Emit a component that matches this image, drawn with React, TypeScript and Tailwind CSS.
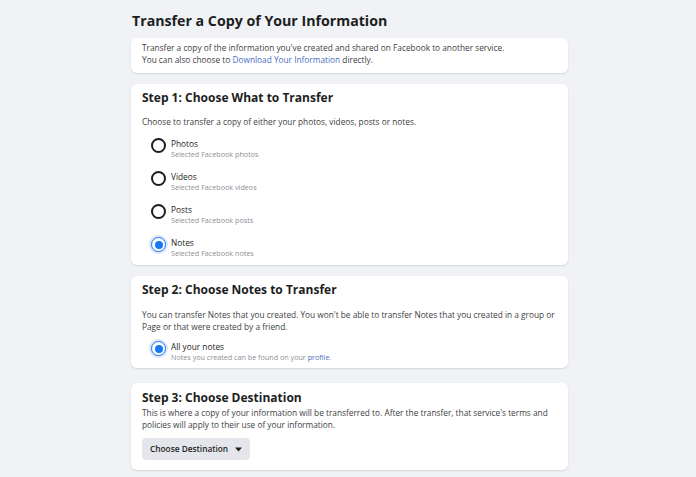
const font = { fontFamily: '"Open Sans", "Noto Sans", Arial, sans-serif' };

function Radio({ checked }: { checked?: boolean }) {
  return checked ? (
    <span className="flex h-[15px] w-[15px] shrink-0 items-center justify-center rounded-full border-[1.5px] border-[#1877f2] bg-white shadow-[0_0_0_2px_#d8e5fb]">
      <span className="h-[8px] w-[8px] rounded-full bg-[#1877f2]" />
    </span>
  ) : (
    <span className="h-[15px] w-[15px] shrink-0 rounded-full border-2 border-[#1c1e21]" />
  );
}

function Option({ label, sub, checked }: { label: string; sub: React.ReactNode; checked?: boolean }) {
  return (
    <div className="flex items-start gap-[5px] pl-[9px]">
      <Radio checked={checked} />
      <div>
        <div className="text-[8.3px] leading-[11px] text-[#1c1e21]">{label}</div>
        <div className="text-[7.2px] leading-[11px] text-[#8d9096]">{sub}</div>
      </div>
    </div>
  );
}

function Card({ children, className = '' }: { children: React.ReactNode; className?: string }) {
  return (
    <section className={`rounded-[6px] bg-white px-[11px] shadow-[0_1px_2px_rgba(0,0,0,0.12)] ${className}`}>
      {children}
    </section>
  );
}

export default function App() {
  const options = [
    { label: 'Photos', sub: 'Selected Facebook photos' },
    { label: 'Videos', sub: 'Selected Facebook videos' },
    { label: 'Posts', sub: 'Selected Facebook posts' },
    { label: 'Notes', sub: 'Selected Facebook notes', checked: true },
  ];

  return (
    <div className="h-[477px] overflow-hidden bg-[#f0f2f5] text-[#1c1e21]" style={font}>
      <div className="ml-[131px] w-[437px] pt-[11px]">
        <h1 className="pl-[1px] text-[14.2px] font-bold leading-[20px]">Transfer a Copy of Your Information</h1>

        <Card className="mt-[7px] pb-[7px] pt-[4px]">
          <p className="text-[8.3px] leading-[12px] text-[#3e4042]">
            Transfer a copy of the information you've created and shared on Facebook to another service.
            <br />
            You can also choose to <span className="text-[#4a6fc0]">Download Your Information</span> directly.
          </p>
        </Card>

        <Card className="mt-[11px] pb-[6px] pt-[6px]">
          <h2 className="text-[12px] font-bold leading-[16px]">Step 1: Choose What to Transfer</h2>
          <p className="mt-[10px] text-[8.3px] leading-[12px] text-[#3e4042]">
            Choose to transfer a copy of either your photos, videos, posts or notes.
          </p>
          <div className="mt-[10px] flex flex-col gap-[11px]">
            {options.map((o) => (
              <Option key={o.label} label={o.label} sub={o.sub} checked={o.checked} />
            ))}
          </div>
        </Card>

        <Card className="mt-[11px] pb-[5px] pt-[6px]">
          <h2 className="text-[12px] font-bold leading-[16px]">Step 2: Choose Notes to Transfer</h2>
          <p className="mt-[11px] text-[8.3px] leading-[12px] text-[#3e4042]">
            You can transfer Notes that you created. You won't be able to transfer Notes that you created in a group or
            Page or that were created by a friend.
          </p>
          <div className="mt-[8px]">
            <Option
              label="All your notes"
              checked
              sub={
                <>
                  Notes you created can be found on your <span className="text-[#4a6fc0]">profile</span>.
                </>
              }
            />
          </div>
        </Card>

        <Card className="mt-[15px] pb-[10px] pt-[7px]">
          <h2 className="text-[12px] font-bold leading-[16px]">Step 3: Choose Destination</h2>
          <p className="mt-[1px] text-[8.3px] leading-[12px] text-[#3e4042]">
            This is where a copy of your information will be transferred to. After the transfer, that service's terms and
            policies will apply to their use of your information.
          </p>
          <button
            type="button"
            className="mt-[7px] flex h-[22px] items-center gap-[7px] whitespace-nowrap rounded-[4px] bg-[#e4e6eb] px-[8px] text-[8.3px] font-semibold text-[#1c1e21]"
          >
            Choose Destination
            <svg width="7" height="5" viewBox="0 0 7 5">
              <path d="M0 0.5h7L3.5 4.5z" fill="#1c1e21" />
            </svg>
          </button>
        </Card>
      </div>
    </div>
  );
}
